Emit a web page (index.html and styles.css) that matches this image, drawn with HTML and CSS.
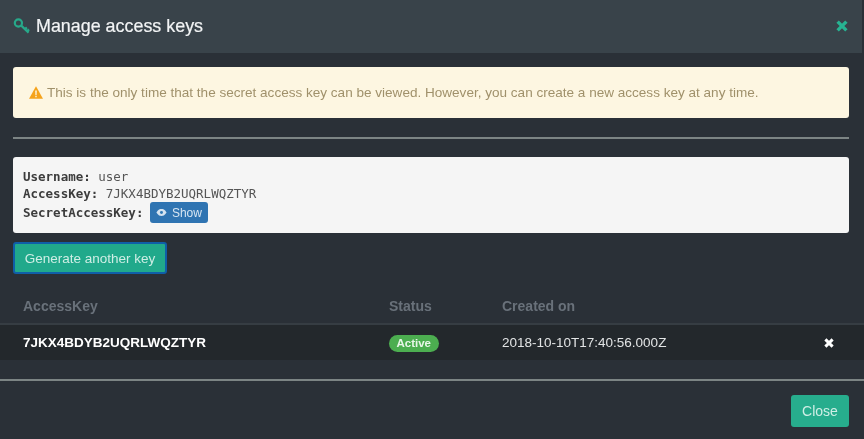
FILE: index.html
```html
<!DOCTYPE html>
<html lang="en">
<head>
<meta charset="utf-8">
<title>Manage access keys</title>
<link rel="stylesheet" href="styles.css">
</head>
<body>
<div class="modal">
  <header class="modal-header">
    <h4 class="modal-title">
      <svg class="key-icon" viewBox="0 0 18 18" width="18" height="18" aria-hidden="true">
        <circle cx="5.4" cy="6" r="3.6" fill="none" stroke="#27a98a" stroke-width="2.2"/>
        <path d="M8 8.4 L15.6 15.6 M12 12.2 L13.8 10.4 M14.2 14.2 L16 12.4" fill="none" stroke="#27a98a" stroke-width="2.2"/>
      </svg>
      Manage access keys
    </h4>
    <svg class="close-x" viewBox="0 0 12 12" width="12" height="12" aria-hidden="true">
      <path d="M1.6 1.6 L10.4 10.4 M10.4 1.6 L1.6 10.4" stroke="#27b392" stroke-width="3.4" fill="none"/>
    </svg>
  </header>
  <main class="modal-body">
    <div class="alert">
      <svg class="warn-icon" viewBox="0 0 14 13" width="14" height="13" aria-hidden="true">
        <path d="M7 0.2 L14 12.8 H0 Z" fill="#f5a31c"/>
        <path d="M6.2 4.4 H7.8 L7.6 9 H6.4 Z M6.3 9.8 H7.7 V11.2 H6.3 Z" fill="#fdf6e0"/>
      </svg>
      <span>This is the only time that the secret access key can be viewed. However, you can create a new access key at any time.</span>
    </div>
    <hr class="rule rule-top">
    <div class="creds">
      <div class="cred-line"><b>Username:</b> user</div>
      <div class="cred-line"><b>AccessKey:</b> 7JKX4BDYB2UQRLWQZTYR</div>
      <div class="cred-line"><b>SecretAccessKey:</b>
        <button class="btn-show" type="button">
          <svg viewBox="0 0 14 10" width="12" height="9" aria-hidden="true">
            <path d="M0.5 5 C3 1 5 0.6 7 0.6 C9 0.6 11 1 13.5 5 C11 9 9 9.4 7 9.4 C5 9.4 3 9 0.5 5 Z" fill="#d5e3f0"/>
            <circle cx="7" cy="5" r="1.9" fill="#337ab7"/>
          </svg>
          Show
        </button>
      </div>
    </div>
    <button class="btn-generate" type="button">Generate another key</button>
    <table class="keys">
      <thead>
        <tr><th class="col-key">AccessKey</th><th class="col-status">Status</th><th class="col-date">Created on</th><th class="col-act"></th></tr>
      </thead>
      <tbody>
        <tr>
          <td class="key-cell">7JKX4BDYB2UQRLWQZTYR</td>
          <td><span class="badge">Active</span></td>
          <td>2018-10-10T17:40:56.000Z</td>
          <td class="act-cell">
            <svg viewBox="0 0 10 10" width="10" height="10" aria-hidden="true">
              <path d="M1.4 1.4 L8.6 8.6 M8.6 1.4 L1.4 8.6" stroke="#fff" stroke-width="3" fill="none"/>
            </svg>
          </td>
        </tr>
      </tbody>
    </table>
  </main>
  <footer class="modal-footer">
    <button class="btn-close" type="button">Close</button>
  </footer>
</div>
</body>
</html>
```
FILE: styles.css
```css
* { box-sizing: border-box; }
html, body { margin: 0; height: 100%; }
body {
  background: #2a3037;
  font-family: "Liberation Sans", Arial, sans-serif;
  overflow: hidden;
}
.modal {
  width: 864px;
  height: 439px;
  background: #2a3037;
  display: flex;
  flex-direction: column;
  filter: blur(0.45px);
}
.modal-header {
  height: 53px;
  margin-right: 2px;
  background: #39434a;
  display: flex;
  align-items: center;
  justify-content: space-between;
  padding: 0 14px 0 13px;
}
.modal-title {
  margin: 0;
  display: flex;
  align-items: center;
  gap: 5px;
  color: #f2f4f5;
  font-size: 17.9px;
  font-weight: 400;
  -webkit-text-stroke: 0.2px #f2f4f5;
}
.key-icon { margin-top: -1px; }
.close-x { margin-top: -1px; }
.modal-body {
  padding: 14px 15px 0 13px;
  flex: 1;
}
.alert {
  height: 51px;
  background: #fdf6e1;
  border-radius: 3px;
  padding: 0 16px;
  display: flex;
  align-items: center;
  gap: 4px;
  color: #a0916b;
  font-size: 13.55px;
  white-space: nowrap;
}
.rule {
  border: 0;
  height: 2px;
  margin: 0;
  background: #7c8484;
}
.rule-top { margin-top: 19px; }
.creds {
  margin-top: 18px;
  height: 76px;
  background: #f5f5f5;
  border-radius: 3px;
  padding: 11px 10px 0;
  font-family: "DejaVu Sans Mono", "Liberation Mono", monospace;
  font-size: 12.5px;
  color: #555;
}
.cred-line {
  line-height: 17px;
  white-space: nowrap;
}
.cred-line b { color: #3c3c3c; }
.btn-show {
  display: inline-flex;
  align-items: center;
  gap: 5px;
  width: 58px;
  height: 21px;
  margin-left: -1px;
  padding: 0 6px;
  border: 0;
  border-radius: 3px;
  background: #2f74b2;
  color: #d7e5f2;
  font-family: "Liberation Sans", Arial, sans-serif;
  font-size: 12px;
}
.btn-generate {
  display: block;
  margin-top: 9px;
  width: 154px;
  height: 32px;
  background: #21a98b;
  border: 2px solid #0f5fa8;
  border-radius: 3px;
  color: #cfeee5;
  font-family: inherit;
  font-size: 13.5px;
  padding: 0;
}
.keys {
  margin: 22px -15px 0 -13px;
  width: 864px;
  border-collapse: collapse;
  table-layout: fixed;
}
.keys th {
  height: 28px;
  padding: 0 0 8px 23px;
  text-align: left;
  color: #69717a;
  font-size: 14px;
  font-weight: 700;
  border-bottom: 2px solid #363d43;
}
.col-key { width: 389px; }
.col-status { width: 113px; }
.col-date { width: 300px; }
.keys .col-status, .keys .col-date { padding-left: 0; }
.keys td {
  height: 36px;
  background: #23282c;
  color: #e2e4e5;
  font-size: 13.5px;
  padding: 0;
}
.keys .key-cell {
  padding-left: 23px;
  color: #fff;
  font-weight: 700;
}
.keys .act-cell { line-height: 0; padding-left: 22px; }
.badge {
  display: inline-block;
  margin-top: 2px;
  background: #4cae50;
  color: #e8f6e8;
  font-size: 11.5px;
  font-weight: 700;
  line-height: 17px;
  height: 17px;
  padding: 0 7.5px;
  border-radius: 9px;
}
.modal-footer {
  margin-top: auto;
  height: 60px;
  border-top: 2px solid #7c8484;
  display: flex;
  justify-content: flex-end;
  align-items: flex-start;
  padding: 14px 15px 0 0;
}
.btn-close {
  width: 58px;
  height: 32px;
  background: #27ad8d;
  border: 0;
  border-radius: 3px;
  color: #cfeee5;
  font-family: inherit;
  font-size: 14px;
  padding: 0;
}
```
